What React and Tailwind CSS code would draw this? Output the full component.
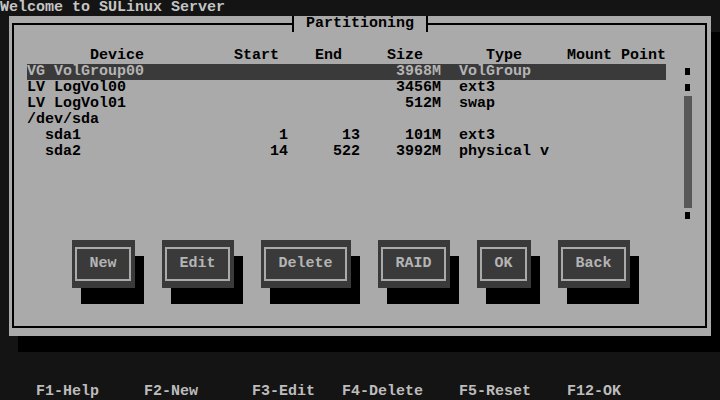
import React from "react";

const rows = [
  { name: "VG VolGroup00", start: "", end: "", size: "3968M", type: "VolGroup", sel: true },
  { name: "LV LogVol00", start: "", end: "", size: "3456M", type: "ext3" },
  { name: "LV LogVol01", start: "", end: "", size: "512M", type: "swap" },
  { name: "/dev/sda", start: "", end: "", size: "", type: "" },
  { name: "sda1", indent: true, start: "1", end: "13", size: "101M", type: "ext3" },
  { name: "sda2", indent: true, start: "14", end: "522", size: "3992M", type: "physical v" },
  null,
  null,
  null,
  null,
];

const buttons = [
  { label: "New", w: "w-[63px]" },
  { label: "Edit", w: "w-[72px]" },
  { label: "Delete", w: "w-[90px]" },
  { label: "RAID", w: "w-[72px]" },
  { label: "OK", w: "w-[54px]" },
  { label: "Back", w: "w-[72px]" },
];

const help = [
  { label: "F1-Help", w: "w-[108px]" },
  { label: "F2-New", w: "w-[108px]" },
  { label: "F3-Edit", w: "w-[90px]" },
  { label: "F4-Delete", w: "w-[117px]" },
  { label: "F5-Reset", w: "w-[108px]" },
  { label: "F12-OK", w: "w-[81px]" },
];

function ListRow({ row }) {
  if (!row) return <div className="h-4 w-[639px]" />;
  return (
    <div
      className={
        "h-4 w-[639px] flex whitespace-pre " +
        (row.sel ? "bg-[#3a3a3a] text-[#b4b4b4]" : "text-black")
      }
    >
      <span className={"w-[207px] " + (row.indent ? "pl-[18px]" : "")}>{row.name}</span>
      <span className="w-[54px] text-right">{row.start}</span>
      <span className="w-[72px] text-right">{row.end}</span>
      <span className="w-[81px] text-right">{row.size}</span>
      <span className="w-[18px]" />
      <span className="w-[108px]">{row.type}</span>
    </div>
  );
}

function Button({ label, w }) {
  return (
    <div className={"h-[48px] shrink-0 bg-[#3a3a3a] shadow-[9px_16px_0_0_#000] pt-[7px] pl-[3px] pr-[4px] pb-[7px] " + w}>
      <div className="h-full border-2 border-[#aaaaaa] flex items-center justify-center text-[#b4b4b4]">
        {label}
      </div>
    </div>
  );
}

function Dot() {
  return (
    <div className="h-4 pt-[4px] pl-[1px]">
      <div className="w-[5px] h-[7px] bg-black" />
    </div>
  );
}

export default function App() {
  return (
    <div className="w-[720px] h-[400px] bg-[#141414] font-['Liberation_Mono','DejaVu_Sans_Mono',monospace] text-[15px] leading-[16px] font-bold flex flex-col overflow-hidden">
      <div className="h-4 text-[#c4c4c4] whitespace-pre">Welcome to SULinux Server</div>

      <div className="relative ml-[9px] w-[702px] h-[320px] shrink-0 bg-[#aaaaaa] shadow-[9px_16px_0_0_#000] pt-[7px] pl-[3px] pr-[4px] pb-[8px]">
        <div className="h-full border-2 border-black flex flex-col">
          <div className="pl-[13px] pt-[23px] flex flex-col">
            <div className="h-4 flex whitespace-pre text-black">
              <span className="w-[207px] pl-[63px]">Device</span>
              <span className="w-[54px]">Start</span>
              <span className="w-[72px] pl-[27px]">End</span>
              <span className="w-[81px] pl-[27px]">Size</span>
              <span className="w-[18px]" />
              <span className="w-[108px] pl-[27px]">Type</span>
              <span>Mount Point</span>
            </div>
            <div className="flex gap-[18px]">
              <div className="flex flex-col">
                {rows.map((r, i) => (
                  <ListRow key={i} row={r} />
                ))}
              </div>
              <div className="w-[9px] flex flex-col">
                <Dot />
                <Dot />
                <div className="h-[112px] w-[8px] bg-[#575757]" />
                <Dot />
              </div>
            </div>
          </div>
          <div className="mt-4 pl-[58px] flex gap-[27px]">
            {buttons.map((b) => (
              <Button key={b.label} label={b.label} w={b.w} />
            ))}
          </div>
        </div>

        <div className="absolute left-[283px] top-0 h-4 w-[136px] border-x-2 border-black bg-[#aaaaaa] pl-[12px] text-black whitespace-pre">
          Partitioning
        </div>
      </div>

      <div className="mt-[48px] h-4 pl-[36px] flex whitespace-pre text-[#bcbcbc]">
        {help.map((h) => (
          <span key={h.label} className={h.w}>
            {h.label}
          </span>
        ))}
      </div>
    </div>
  );
}
